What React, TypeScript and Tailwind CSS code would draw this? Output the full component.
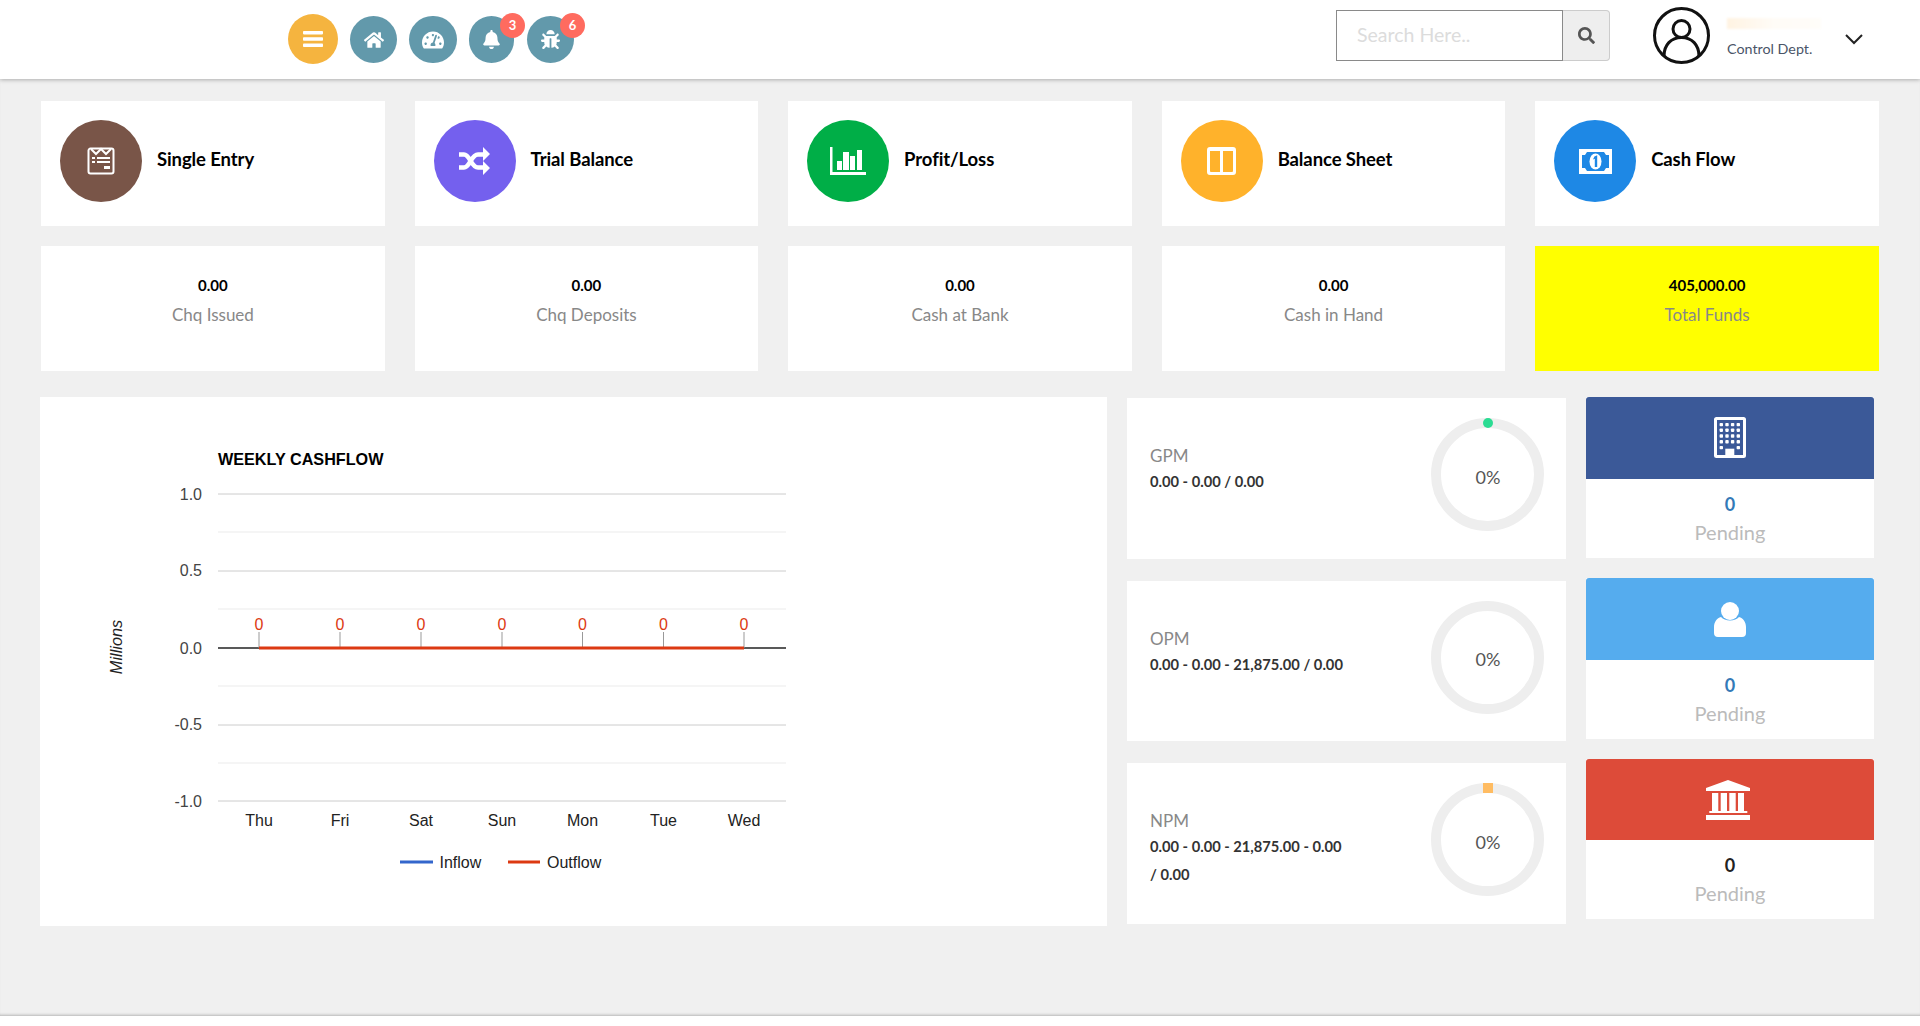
import { FaBell, FaBug, FaHome, FaSearch, FaTachometerAlt } from "react-icons/fa";
import type { ReactNode } from "react";

const lato = "font-['Lato','Liberation_Sans',sans-serif]";

function ReceiptIcon() {
  return (
    <svg width="28" height="28" viewBox="0 0 28 28" fill="none">
      <path d="M1.500 3.500a2 2 0 0 1 2-2h21a2 2 0 0 1 2 2v21a2 2 0 0 1-2 2h-21a2 2 0 0 1-2-2z" stroke="#fff" strokeWidth="2" />
      <path d="M4 2l5 5 5-5 5 5 5-5" stroke="#fff" strokeWidth="2" />
      <path fill="#fff" d="M5 10h3v2H5zM10 10h13v2H10zM5 14h3v2H5zM10 14h13v2H10zM17 19h6v3h-6z" />
    </svg>
  );
}

function ShuffleIcon() {
  return (
    <svg width="31" height="28" viewBox="0 0 31 28" fill="none" stroke="#fff" strokeWidth="4.500">
      <path d="M0 7.500h5c6 0 7 13 14 13h6" />
      <path d="M0 20.500h5c6 0 7-13 14-13h6" />
      <path fill="#fff" stroke="none" d="M24 0l7 7-7 7zM24 14l7 7-7 7z" />
    </svg>
  );
}

function BarsIcon() {
  return (
    <svg width="36" height="28" viewBox="0 0 36 28" fill="#fff">
      <path d="M0 0h2.500v25H36v3H0z" />
      <path d="M7 14h5v9H7zM13 5h6v18h-6zM20 9h5v14h-5zM27 3h5v20h-5z" />
    </svg>
  );
}

function ColumnsIcon() {
  return (
    <svg width="29" height="28" viewBox="0 0 29 28" fill="#fff">
      <path
        fillRule="evenodd"
        d="M3 0h23a3 3 0 0 1 3 3v22a3 3 0 0 1-3 3H3a3 3 0 0 1-3-3V3a3 3 0 0 1 3-3zM3 4v20a1 1 0 0 0 1 1h9V4zM16 4v21h9a1 1 0 0 0 1-1V4z"
      />
    </svg>
  );
}

function MoneyIcon() {
  return (
    <svg width="33" height="25" viewBox="0 0 33 25">
      <rect width="33" height="25" fill="#fff" />
      <path d="M8 3h17l2 3h3v13h-3l-2 3H8l-2-3H3V6h3z" fill="#1e88e5" />
      <ellipse cx="16.500" cy="12.500" rx="6" ry="8" fill="#fff" />
      <path d="M15.400 7.500l2.800-1.200V18h-2.400v-8.200l-1.800.8z" fill="#1e88e5" />
    </svg>
  );
}

function BuildingIcon() {
  const cols = [7.3, 13, 18.6, 24.3];
  const rows = [7.6, 13.2, 19, 24.8];
  return (
    <svg className="mb-[2px]" width="32" height="41" viewBox="0 0 32 41">
      <rect x="1.500" y="1.500" width="29" height="38" rx="1" fill="#3b5998" stroke="#fff" strokeWidth="3" />
      {rows.map((y) =>
        cols.map((x) => <rect key={`${x}-${y}`} x={x - 1.7} y={y - 1.7} width="3.400" height="3.400" rx="0.800" fill="#fff" />),
      )}
      <rect x="5.600" y="28.900" width="3.400" height="3.400" rx="0.800" fill="#fff" />
      <rect x="22.600" y="28.900" width="3.400" height="3.400" rx="0.800" fill="#fff" />
      <rect x="11.300" y="31.700" width="9" height="8" fill="#fff" />
    </svg>
  );
}

function UserIcon() {
  return (
    <svg width="32" height="35" viewBox="0 0 32 35" fill="#fff">
      <circle cx="16" cy="9" r="9" />
      <path d="M0 31v-6c0-5 3-9 7-10 2 2 5 3.500 9 3.500s7-1.500 9-3.500c4 1 7 5 7 10v6a4 4 0 0 1-4 4H4a4 4 0 0 1-4-4z" />
    </svg>
  );
}

function BankIcon() {
  return (
    <svg className="mr-[4px]" width="44" height="40" viewBox="0 0 44 40" fill="#fff">
      <path d="M22 0l22 8v3H0V8z" />
      <path d="M6 13h6.300v18H6zM14.700 13H21v18h-6.300zM23.300 13h6.400v18h-6.400zM32 13h6v18h-6z" />
      <path d="M3.300 31h38v2h-38zM0 35h44v5H0z" />
    </svg>
  );
}

function AvatarIcon() {
  return (
    <svg width="57" height="57" viewBox="0 0 57 57" fill="none" stroke="#111" strokeWidth="3">
      <circle cx="28.500" cy="28.500" r="27" />
      <circle cx="28.500" cy="22" r="8.500" />
      <path d="M11 49c0-11 7-18.500 17.500-18.500S46 38 46 49" />
    </svg>
  );
}

function RoundBtn({ w, className, children, badge }: { w: string; className: string; children: ReactNode; badge?: string }) {
  return (
    <div className={`relative flex h-[47px] items-center justify-center rounded-full bg-[#6299ab] text-white ${w} ${className}`}>
      {children}
      {badge && (
        <span className={`absolute right-[-11px] top-[-3px] flex h-[25px] w-[25px] items-center justify-center rounded-full bg-[#ff6b5f] text-[13px] font-bold ${lato}`}>
          {badge}
        </span>
      )}
    </div>
  );
}

function Header() {
  return (
    <header className="relative z-10 flex h-[79px] shrink-0 items-start bg-white pl-[288px] shadow-[0_1px_4px_rgba(0,0,0,0.28)]">
      <div className="mt-[14px] flex h-[50px] w-[50px] items-center justify-center rounded-full bg-[#f5b43f]">
        <svg width="20" height="16" viewBox="0 0 20 16" fill="#fff">
          <rect width="20" height="3.400" rx="0.800" />
          <rect y="6.300" width="20" height="3.400" rx="0.800" />
          <rect y="12.600" width="20" height="3.400" rx="0.800" />
        </svg>
      </div>
      <RoundBtn w="w-[47px]" className="ml-[12px] mt-[16px]">
        <FaHome size={20} />
      </RoundBtn>
      <RoundBtn w="w-[48px]" className="ml-[12px] mt-[16px]">
        <FaTachometerAlt size={22} />
      </RoundBtn>
      <RoundBtn w="w-[45px]" className="ml-[12px] mt-[16px]" badge="3">
        <FaBell size={19} />
      </RoundBtn>
      <RoundBtn w="w-[47px]" className="ml-[13px] mt-[16px]" badge="6">
        <FaBug size={19} />
      </RoundBtn>

      <div className="ml-auto mt-[10px] flex h-[51px]">
        <input
          placeholder="Search Here.."
          className={`h-full w-[227px] border border-[#8a8a8a] bg-white pb-[2px] pl-[20px] text-[19.500px] outline-none placeholder:text-[#dcdcdc] ${lato}`}
        />
        <div className="flex h-full w-[47px] items-center justify-center rounded-r-[4px] border border-l-0 border-[#ccc] bg-[#eee] text-[#555]">
          <FaSearch size={17} />
        </div>
      </div>
      <div className="ml-[43px] mt-[7px]">
        <AvatarIcon />
      </div>
      <div className="ml-[17px] mt-[18px] w-[118px]">
        <div className="h-[11px] w-[94px] bg-gradient-to-r from-[#fff3e2] via-[#fffcf7] to-[#fffdf9] blur-[1px]" />
        <div className={`mt-[10px] text-[14.300px] leading-[20px] text-[#4a5568] ${lato}`}>Control Dept.</div>
      </div>
      <svg className="mr-[57px] mt-[34px]" width="18" height="11" viewBox="0 0 18 11" fill="none" stroke="#222" strokeWidth="2">
        <path d="M1 1l8 8 8-8" />
      </svg>
    </header>
  );
}

const shortcuts: { label: string; color: string; icon: ReactNode }[] = [
  { label: "Single Entry", color: "bg-[#795548]", icon: <ReceiptIcon /> },
  { label: "Trial Balance", color: "bg-[#7460ee]", icon: <ShuffleIcon /> },
  { label: "Profit/Loss", color: "bg-[#00ae47]", icon: <BarsIcon /> },
  { label: "Balance Sheet", color: "bg-[#ffb22b]", icon: <ColumnsIcon /> },
  { label: "Cash Flow", color: "bg-[#1e88e5]", icon: <MoneyIcon /> },
];

const stats = [
  { value: "0.00", label: "Chq Issued", bg: "bg-white" },
  { value: "0.00", label: "Chq Deposits", bg: "bg-white" },
  { value: "0.00", label: "Cash at Bank", bg: "bg-white" },
  { value: "0.00", label: "Cash in Hand", bg: "bg-white" },
  { value: "405,000.00", label: "Total Funds", bg: "bg-[#ffff00]" },
];

const majorLines = [
  { y: 494, label: "1.0", dy: 6 },
  { y: 571, label: "0.5", dy: 5 },
  { y: 725, label: "-0.5", dy: 5 },
  { y: 801, label: "-1.0", dy: 6 },
];
const minorLines = [532, 609, 686, 763];
const days = [
  { x: 259, label: "Thu" },
  { x: 340, label: "Fri" },
  { x: 421, label: "Sat" },
  { x: 502, label: "Sun" },
  { x: 582.5, label: "Mon" },
  { x: 663.5, label: "Tue" },
  { x: 744, label: "Wed" },
];

function Chart() {
  return (
    <svg width="1067" height="529" viewBox="40 397 1067 529" className="block font-['Liberation_Sans',sans-serif]">
      <text x="218" y="465" fontSize="16.200" fontWeight="700" fill="#000">
        WEEKLY CASHFLOW
      </text>
      {minorLines.map((y) => (
        <line key={y} x1="218" x2="786" y1={y} y2={y} stroke="#ebebeb" />
      ))}
      {majorLines.map((l) => (
        <g key={l.y}>
          <line x1="218" x2="786" y1={l.y} y2={l.y} stroke="#ccc" />
          <text x="202" y={l.y + l.dy} fontSize="16" textAnchor="end" fill="#444">
            {l.label}
          </text>
        </g>
      ))}
      <text x="202" y="653.500" fontSize="16" textAnchor="end" fill="#444">
        0.0
      </text>
      <line x1="218" x2="786" y1="648" y2="648" stroke="#222" strokeWidth="1.500" />
      {days.map((d) => (
        <g key={d.label}>
          <line x1={d.x} x2={d.x} y1="632" y2="648" stroke="#999" />
          <text x={d.x} y="630" fontSize="16" textAnchor="middle" fill="#dc3912">
            0
          </text>
          <text x={d.x} y="826" fontSize="16" textAnchor="middle" fill="#222">
            {d.label}
          </text>
        </g>
      ))}
      <line x1="259" x2="744" y1="648" y2="648" stroke="#dc3912" strokeWidth="3" />
      <text transform="translate(122 647) rotate(-90)" fontSize="16.300" fontStyle="italic" textAnchor="middle" fill="#222">
        Millions
      </text>
      <line x1="400" x2="433" y1="862" y2="862" stroke="#3366cc" strokeWidth="3" />
      <text x="439.500" y="868" fontSize="16" fill="#222">
        Inflow
      </text>
      <line x1="508" x2="540" y1="862" y2="862" stroke="#dc3912" strokeWidth="3" />
      <text x="547" y="868" fontSize="16" fill="#222">
        Outflow
      </text>
    </svg>
  );
}

function Ring({ marker }: { marker?: "dot" | "square" }) {
  return (
    <div className="relative flex h-[113px] w-[113px] shrink-0 items-center justify-center rounded-full border-[10px] border-[#eee] pl-[1px] pt-[5px]">
      <span className={`text-[18px] text-[#555] ${lato}`}>0%</span>
      {marker === "dot" && <span className="absolute left-1/2 top-[-10px] h-[10px] w-[10px] -translate-x-1/2 rounded-full bg-[#2bdc93]" />}
      {marker === "square" && <span className="absolute left-1/2 top-[-10px] h-[10px] w-[10px] -translate-x-1/2 bg-[#ffbc62]" />}
    </div>
  );
}

const margins: { title: string; formula: string; marker?: "dot" | "square" }[] = [
  { title: "GPM", formula: "0.00 - 0.00 / 0.00", marker: "dot" },
  { title: "OPM", formula: "0.00 - 0.00 - 21,875.00 / 0.00" },
  { title: "NPM", formula: "0.00 - 0.00 - 21,875.00 - 0.00 / 0.00", marker: "square" },
];

const pending = [
  { card: "h-[161px]", head: "h-[82px] bg-[#3b5998]", value: "text-[#337ab7]", icon: <BuildingIcon /> },
  { card: "h-[161px]", head: "h-[82px] bg-[#55acee]", value: "text-[#337ab7]", icon: <UserIcon /> },
  { card: "h-[160px]", head: "h-[81px] bg-[#dd4b39]", value: "text-[#222]", icon: <BankIcon /> },
];

export default function App() {
  return (
    <div className={`flex h-[1026px] flex-col overflow-hidden bg-white ${lato}`}>
      <Header />
      <main className="flex-1 bg-[#f0f0f0] pl-[41px] pr-[41px] pt-[22px] shadow-[inset_0_-3px_3px_-2px_rgba(0,0,0,0.25)]">
        <div className="grid grid-cols-5 gap-x-[29.750px] gap-y-[20px]">
          {shortcuts.map((s) => (
            <div key={s.label} className="flex h-[125px] items-start bg-white pl-[19px] pt-[19px]">
              <div className={`flex h-[82px] w-[82px] shrink-0 items-center justify-center rounded-full text-white ${s.color}`}>{s.icon}</div>
              <span className="ml-[15px] mt-[25px] text-[18.500px] font-bold leading-[28px] tracking-[-0.1px] text-black">{s.label}</span>
            </div>
          ))}
          {stats.map((s) => (
            <div key={s.label} className={`flex h-[125px] flex-col items-center pt-[27px] ${s.bg}`}>
              <span className="text-[15px] font-bold leading-[24px] text-black">{s.value}</span>
              <span className="text-[17px] leading-[36px] text-[#888]">{s.label}</span>
            </div>
          ))}
        </div>

        <div className="mt-[26px] flex gap-[20px]">
          <div className="ml-[-1px] h-[529px] w-[1067px] bg-white">
            <Chart />
          </div>
          <div className="mt-[1px] flex w-[439px] flex-col gap-[22px]">
            {margins.map((m) => (
              <div key={m.title} className="flex h-[160.500px] items-start justify-between bg-white pl-[23px] pr-[22px] pt-[20px]">
                <div className="w-[198px] pt-[26px]">
                  <div className="text-[17px] leading-[24px] text-[#888]">{m.title}</div>
                  <div className="text-[14.700px] font-bold leading-[27.500px] text-[#333]">{m.formula}</div>
                </div>
                <Ring marker={m.marker} />
              </div>
            ))}
          </div>
          <div className="flex w-[288px] flex-col gap-[20px]">
            {pending.map((p, i) => (
              <div key={i} className={`bg-white ${p.card}`}>
                <div className={`flex items-center justify-center rounded-t-[3px] text-white ${p.head}`}>{p.icon}</div>
                <div className="flex flex-col items-center pt-[11px]">
                  <span className={`text-[18px] font-bold leading-[28px] ${p.value}`}>0</span>
                  <span className="text-[20px] leading-[29px] text-[#bbb]">Pending</span>
                </div>
              </div>
            ))}
          </div>
        </div>
      </main>
      <footer className="h-[10px] shrink-0 bg-white" />
    </div>
  );
}
